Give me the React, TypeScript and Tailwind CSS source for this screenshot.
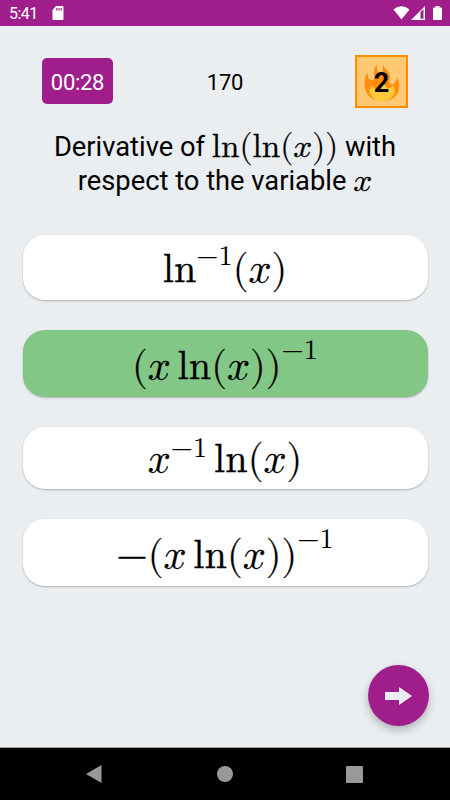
import React from "react";

/* The outer span's strut fixes the baseline; the inner one holds the math face. */
function Formula({ children }: { children: React.ReactNode }) {
  return (
    <span className="block whitespace-nowrap font-['Liberation_Serif',serif] leading-none">
      <span className="font-['Latin_Modern_Math','Liberation_Serif',serif] leading-[0] [-webkit-text-stroke:0.3px_#000]">
        {children}
      </span>
    </span>
  );
}

const Thin = () => <span className="inline-block w-[0.167em]" />;

const Inverse = ({ className }: { className: string }) => (
  <span className={`text-[28.500px] leading-[0] [-webkit-text-stroke:0px] ${className}`}>−1</span>
);

function Answer({ className, children }: { className: string; children: React.ReactNode }) {
  return (
    <button
      className={`flex w-[405px] items-start justify-center rounded-[22px] text-[40.400px] text-black shadow-[0_1px_2px_rgba(0,0,0,0.25)] ${className}`}
    >
      <Formula>{children}</Formula>
    </button>
  );
}

export default function App() {
  return (
    <div className="flex h-[800px] w-[450px] flex-col overflow-hidden bg-[#ebeef1] font-['Roboto',sans-serif] text-black">
      <header className="flex h-[26px] shrink-0 items-center bg-[#a01e8c] pl-[9px] pr-[8px] text-white">
        <span className="mt-[2px] w-[29px] text-[16px] leading-none tracking-[-0.5px]">5:41</span>
        <svg className="ml-[14px]" width="12" height="14" viewBox="0 0 12 14">
          <path fill="currentColor" fillRule="evenodd" d="M4 0h6.500Q11.500 0 11.500 1v12q0 1-1 1h-9q-1 0-1-1V4zM4.200 2v2.500h1.200V2zm2.200 0v2.500h1.200V2zm2.200 0v2.500h1.200V2z" />
        </svg>
        <svg className="ml-auto" width="17" height="14" viewBox="0 0 17 14">
          <path fill="currentColor" d="M.5 3.500Q8.500-3 16.500 3.500L8.500 13.500z" />
        </svg>
        <svg className="ml-[1px]" width="14" height="14" viewBox="0 0 14 14">
          <path fill="currentColor" fillRule="evenodd" d="M0 14 14 0v14zM9.500 6v6.700h3V3z" />
        </svg>
        <svg className="ml-[8px]" width="9" height="14" viewBox="0 0 9 14">
          <path fill="currentColor" d="M2.500 0h4v1.500H8q1 0 1 1V13q0 1-1 1H1q-1 0-1-1V2.500q0-1 1-1h1.500z" />
        </svg>
      </header>

      <section className="mt-[28px] flex h-[54px] shrink-0 items-center justify-between px-[42px]">
        <div className="flex h-[46px] w-[71px] items-center justify-center rounded-[5px] bg-[#a01e8c] text-[22px] leading-none text-white">
          <span className="pt-[3px] tracking-[-0.3px]">00:28</span>
        </div>
        <span className="ml-[-18px] pt-[3px] text-[22px] leading-none tracking-[-0.2px]">170</span>
        <div className="mt-px grid h-[53px] w-[53px] place-items-center border-2 border-[#ff8c00] bg-[#ffc974]">
          <svg className="col-start-1 row-start-1" width="36" height="38" viewBox="0 0 36 38">
            <path fill="#ff8f0a" d="M19 .5c-1 4 6.500 6 7 13 .1 3-1.500 6 .5 7.500 3 1.500 6-2 6.500-6.500 3 6 3 12 0 17C29.500 36 24 38 18 38 9 38 1.500 33 .5 23 .2 18 1 13 3.500 9.500c0 4 1 7.500 4 7.500 3 0 3.500-2.500 3-5-1-4 0-8 2.500-11-.5 4 0 8.500 3.500 8.500C20.500 9.500 18 5 19 .5z" />
            <path fill="#ffc83d" d="M5.500 30c-.5-4 1.500-6 2-8 1 2 3 4 5 4 3 0 3-5 6.500-9 1 4 3 8 6 8 2 0 3-1 4-3 1 3 2 5 2 8-3 5.500-7 8-13 8S9 36 5.500 30z" />
          </svg>
          <span className="z-10 col-start-1 row-start-1 pt-[3px] text-[27px] font-bold leading-none">2</span>
        </div>
      </section>

      <section className="mt-[21px] flex h-[106px] shrink-0 flex-col items-center text-[27.300px] leading-[34px]">
        <div className="flex h-[34px] items-start whitespace-pre">
          <span className="mt-[0.500px]">Derivative of </span>
          <span className="text-[33.300px]"><Formula>ln(ln(𝑥))</Formula></span>
          <span className="mt-[0.500px]"> with</span>
        </div>
        <div className="flex h-[34px] items-start whitespace-pre">
          <span className="mt-[0.500px]">respect to the variable </span>
          <span className="text-[33.300px]"><Formula>𝑥</Formula></span>
        </div>
      </section>

      <main className="flex shrink-0 flex-col items-center">
        <Answer className="h-[65px] bg-white pt-[14px]">
          ln<Inverse className="align-[17px]" />(𝑥)
        </Answer>
        <Answer className="mt-[30px] h-[67px] bg-[#82c785] pt-[16px]">
          (𝑥<Thin />ln(𝑥))<Inverse className="align-[20px]" />
        </Answer>
        <Answer className="mt-[30px] h-[62px] bg-white pt-[12px]">
          𝑥<Inverse className="align-[15px]" /><Thin />ln(𝑥)
        </Answer>
        <Answer className="mt-[30px] h-[67px] bg-white pt-[16px]">
          −(𝑥<Thin />ln(𝑥))<Inverse className="align-[20px]" />
        </Answer>
      </main>

      <div className="mt-[79px] flex shrink-0 justify-end pr-[21px]">
        <button className="flex h-[61px] w-[61px] items-center justify-center rounded-full bg-[#a01e8c] shadow-[0_4px_8px_rgba(0,0,0,0.25)]">
          <svg width="27" height="18" viewBox="0 0 27 18">
            <path fill="#eaeef1" d="M0 5.500Q0 5 .5 5H14V.8q0-1 .8-.3L27 9 14.800 17.500q-.8.700-.8-.3V13H.5Q0 13 0 12.500z" />
          </svg>
        </button>
      </div>

      <nav className="mt-auto flex h-[53px] shrink-0 items-center justify-between border-t border-[#999] bg-black pl-[86px] pr-[87px] text-[#999]">
        <svg width="16" height="18" viewBox="0 0 16 18"><path fill="currentColor" d="M15.500 0v18L0 9z" /></svg>
        <span className="ml-[22px] mr-[21px] h-[16px] w-[16px] rounded-full bg-[#999]" />
        <span className="h-[17px] w-[17px] rounded-[1px] bg-[#999]" />
      </nav>
    </div>
  );
}
